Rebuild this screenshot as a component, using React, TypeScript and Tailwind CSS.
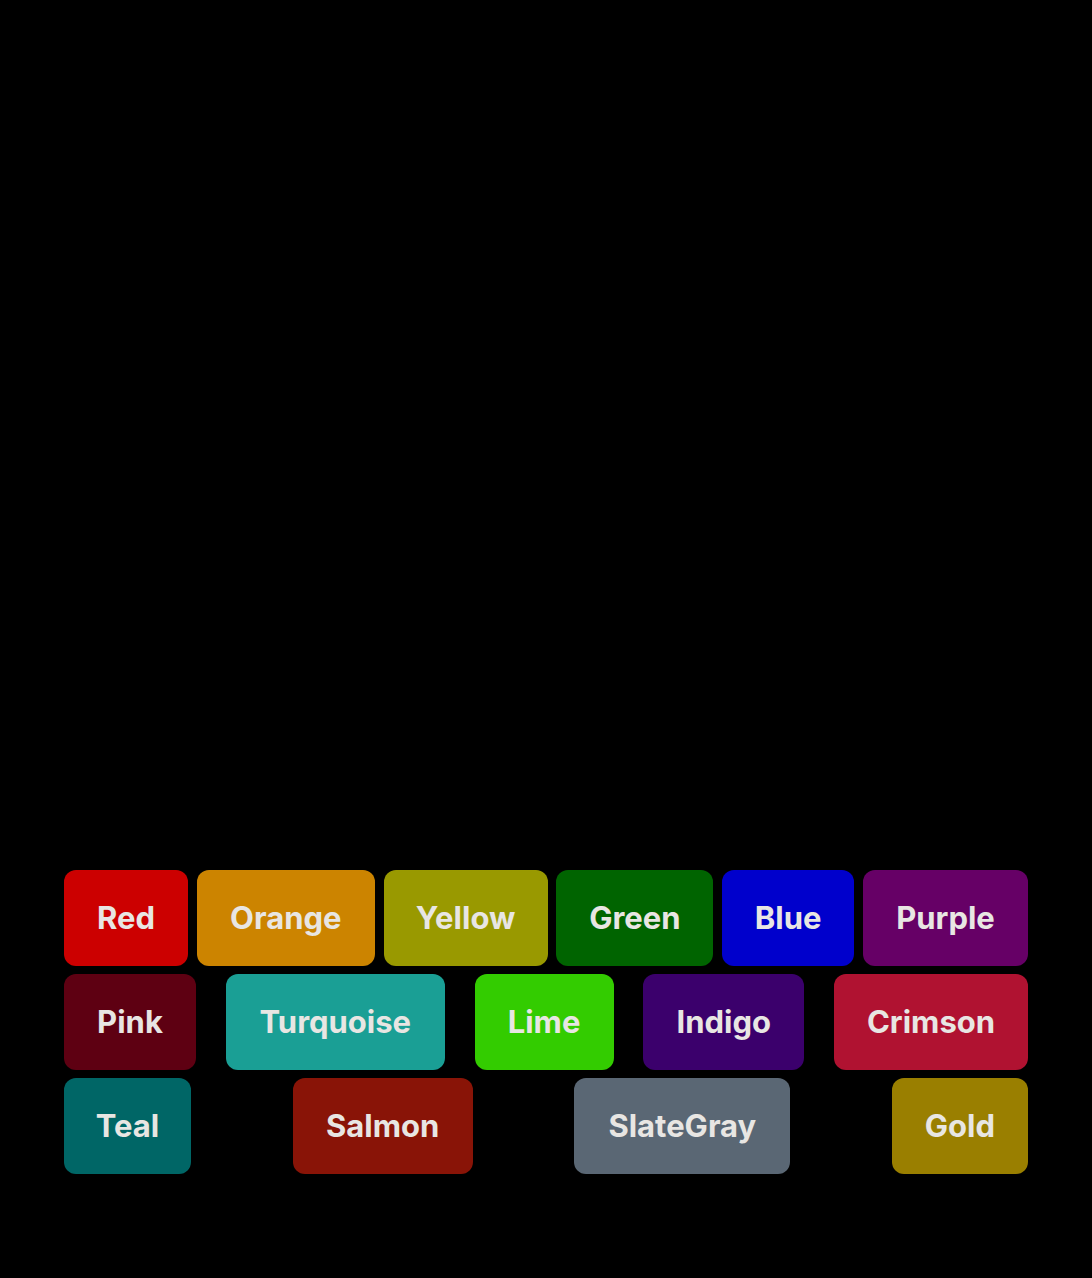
import React from "react";

type Chip = { label: string; bg: string; w: string };

const rows: Chip[][] = [
  [
    { label: "Red", bg: "bg-[#cc0000]", w: "w-[124px]" },
    { label: "Orange", bg: "bg-[#cc8400]", w: "w-[178px]" },
    { label: "Yellow", bg: "bg-[#999900]", w: "w-[164px]" },
    { label: "Green", bg: "bg-[#006400]", w: "w-[157px]" },
    { label: "Blue", bg: "bg-[#0000cc]", w: "w-[132px]" },
    { label: "Purple", bg: "bg-[#660066]", w: "w-[165px]" },
  ],
  [
    { label: "Pink", bg: "bg-[#5e0012]", w: "w-[132px]" },
    { label: "Turquoise", bg: "bg-[#1a9f95]", w: "w-[219px]" },
    { label: "Lime", bg: "bg-[#33cc00]", w: "w-[139px]" },
    { label: "Indigo", bg: "bg-[#3b006c]", w: "w-[161px]" },
    { label: "Crimson", bg: "bg-[#b01231]", w: "w-[194px]" },
  ],
  [
    { label: "Teal", bg: "bg-[#006666]", w: "w-[127px]" },
    { label: "Salmon", bg: "bg-[#891407]", w: "w-[180px]" },
    { label: "SlateGray", bg: "bg-[#5a6774]", w: "w-[216px]" },
    { label: "Gold", bg: "bg-[#9a7f00]", w: "w-[136px]" },
  ],
];

export default function App() {
  return (
    <div
      className="h-[1278px] bg-black flex flex-col justify-end px-16 pb-[104px]"
      style={{ fontFamily: "Inter, 'Noto Sans', sans-serif" }}
    >
      <div className="flex flex-col gap-2">
        {rows.map((row, i) => (
          <div key={i} className="flex justify-between">
            {row.map((c) => (
              <div
                key={c.label}
                className={`${c.bg} ${c.w} h-24 rounded-xl flex items-center justify-center text-[31px] font-bold text-[#e8e6e3]`}
              >
                {c.label}
              </div>
            ))}
          </div>
        ))}
      </div>
    </div>
  );
}
